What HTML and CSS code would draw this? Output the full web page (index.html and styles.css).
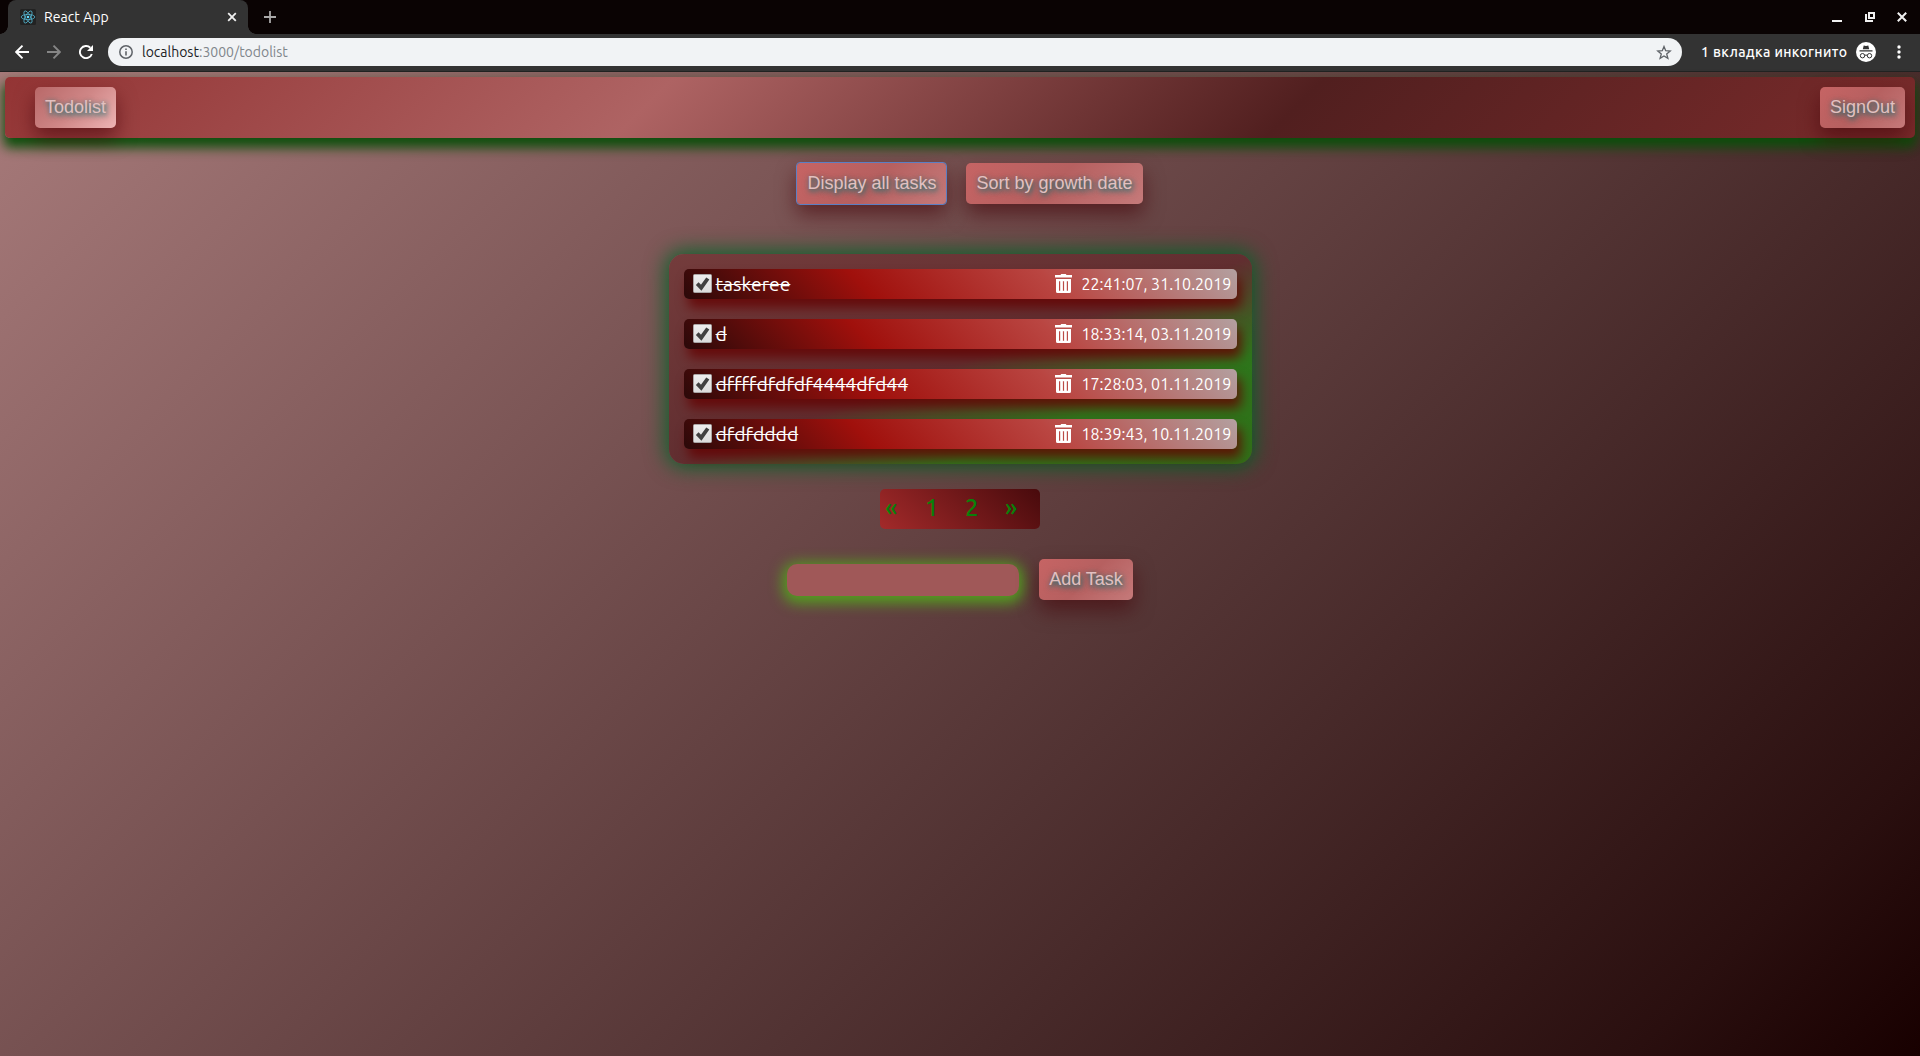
FILE: index.html
```html
<!DOCTYPE html>
<html lang="en">
<head>
<meta charset="utf-8">
<title>React App</title>
<link rel="stylesheet" href="styles.css">
</head>
<body>
<div class="browser">
  <div class="tabbar">
    <div class="tab">
      <svg class="favicon" width="16" height="16" viewBox="0 0 16 16"><rect width="16" height="16" rx="1.5" fill="#222"/><g fill="none" stroke="#53b4cf" stroke-width=".8"><ellipse cx="8" cy="8" rx="6.8" ry="2.6"/><ellipse cx="8" cy="8" rx="6.8" ry="2.6" transform="rotate(60 8 8)"/><ellipse cx="8" cy="8" rx="6.8" ry="2.6" transform="rotate(120 8 8)"/></g><circle cx="8" cy="8" r="1.3" fill="#61dafb"/></svg>
      <span class="tab-title">React App</span>
      <svg width="10" height="10" viewBox="0 0 10 10"><path d="M1.2 1.2l7.6 7.6M8.8 1.2L1.2 8.8" stroke="#f1f1f1" stroke-width="1.8"/></svg>
    </div>
    <svg class="new-tab" width="12" height="12" viewBox="0 0 12 12"><path d="M6 0v12M0 6h12" stroke="#a9a8a8" stroke-width="1.8"/></svg>
    <div class="window-controls">
      <svg width="10" height="12" viewBox="0 0 10 12"><path d="M0 10h10" stroke="#f1f1f1" stroke-width="2"/></svg>
      <svg width="10" height="12" viewBox="0 0 10 12"><path d="M4 2h5v5h-5zM1 3v7h7" fill="none" stroke="#f1f1f1" stroke-width="2"/></svg>
      <svg width="10" height="12" viewBox="0 0 10 12"><path d="M.8 1.8l8.4 8.4M9.200 1.8L.8 10.200" stroke="#f1f1f1" stroke-width="2"/></svg>
    </div>
  </div>
  <div class="toolbar">
    <svg class="nav" width="14" height="14" viewBox="0 0 14 14"><path d="M14 7H1.500M7.500 .7L1.200 7l6.300 6.300" fill="none" stroke="#fff" stroke-width="1.900"/></svg>
    <svg class="nav" width="14" height="14" viewBox="0 0 14 14"><path d="M0 7h12.500M6.500 .7L12.800 7l-6.300 6.300" fill="none" stroke="#868686" stroke-width="1.900"/></svg>
    <svg class="nav" width="14" height="14" viewBox="0 0 14 14"><path d="M12.800 9A6.100 6.100 0 1 1 11.300 2.700" fill="none" stroke="#fff" stroke-width="1.900"/><path d="M14 0v6H8z" fill="#fff"/></svg>
    <div class="omnibox">
      <svg width="14" height="14" viewBox="0 0 14 14"><circle cx="7" cy="7" r="6.200" fill="none" stroke="#5f6368" stroke-width="1.500"/><path d="M7 6.200v4.300M7 3.500v1.500" stroke="#5f6368" stroke-width="1.600"/></svg>
      <span class="url"><b>localhost</b>:3000/todolist</span>
      <svg class="star" width="16" height="15" viewBox="0 0 16 15"><path d="M8 1.500l1.700 4.200 4.500.3-3.500 2.900 1.200 4.400L8 10.900l-3.900 2.400 1.200-4.400L1.800 6l4.500-.3z" fill="none" stroke="#5f6368" stroke-width="1.300"/></svg>
    </div>
    <span class="incognito">1 вкладка инкогнито</span>
    <svg class="avatar" width="20" height="20" viewBox="0 0 20 20"><circle cx="10" cy="10" r="10" fill="#fff"/><path d="M6.800 7.200l.9-3.600 2.300.5 2.300-.5.9 3.600zM3.500 8.200h13v1.200h-13z" fill="#333"/><g fill="none" stroke="#333"><circle cx="6.500" cy="13.700" r="2.200"/><circle cx="13.500" cy="13.700" r="2.200"/><path d="M8.700 13.400q1.300-.8 2.600 0"/></g></svg>
    <svg class="menu" width="4" height="14" viewBox="0 0 4 14"><g fill="#fff"><circle cx="2" cy="2" r="1.700"/><circle cx="2" cy="7" r="1.700"/><circle cx="2" cy="12" r="1.700"/></g></svg>
  </div>
</div>
<main class="page">
  <header class="header">
    <button class="btn btn-light">Todolist</button>
    <button class="btn">SignOut</button>
  </header>
  <div class="filters">
    <button class="btn focused">Display all tasks</button>
    <button class="btn">Sort by growth date</button>
  </div>
  <ul class="tasks">
    <li class="task"><svg class="check" width="19" height="19" viewBox="0 0 19 19"><use href="#check"/></svg><span class="name">taskeree</span><svg width="17" height="19" viewBox="0 0 17 19"><use href="#trash"/></svg><time class="time">22:41:07, 31.10.2019</time></li>
    <li class="task"><svg class="check" width="19" height="19" viewBox="0 0 19 19"><use href="#check"/></svg><span class="name">d</span><svg width="17" height="19" viewBox="0 0 17 19"><use href="#trash"/></svg><time class="time">18:33:14, 03.11.2019</time></li>
    <li class="task"><svg class="check" width="19" height="19" viewBox="0 0 19 19"><use href="#check"/></svg><span class="name">dffffdfdfdf4444dfd44</span><svg width="17" height="19" viewBox="0 0 17 19"><use href="#trash"/></svg><time class="time">17:28:03, 01.11.2019</time></li>
    <li class="task"><svg class="check" width="19" height="19" viewBox="0 0 19 19"><use href="#check"/></svg><span class="name">dfdfdddd</span><svg width="17" height="19" viewBox="0 0 17 19"><use href="#trash"/></svg><time class="time">18:39:43, 10.11.2019</time></li>
  </ul>
  <nav class="pager"><span>«</span><span>1</span><span>2</span><span>»</span></nav>
  <form class="add">
    <input class="field" type="text">
    <button class="btn" type="button">Add Task</button>
  </form>
</main>
<svg class="defs" width="0" height="0">
  <defs>
    <linearGradient id="box" x1="0" y1="0" x2="0" y2="1"><stop offset="0" stop-color="#eee"/><stop offset="1" stop-color="#dcdcdc"/></linearGradient>
    <g id="check"><rect x=".5" y=".5" width="18" height="18" rx="1" fill="url(#box)" stroke="#a9a5a5"/><path d="M4.200 9.700l4 4 6.600-9.200" fill="none" stroke="#404040" stroke-width="3.800"/></g>
    <g id="trash" fill="#fff"><path d="M0 1h5.500l.7-1h4.600l.7 1H17v2.600H0z"/><path fill-rule="evenodd" d="M1 5h15v12.500q0 1.500-1.500 1.500h-12Q1 19 1 17.500zM4 7.200v9.500h1.200V7.200zM7.900 7.200v9.500h1.200V7.200zM11.800 7.200v9.500h1.200V7.200z"/></g>
  </defs>
</svg>
</body>
</html>
```
FILE: styles.css
```css
* { box-sizing: border-box; }
body {
  margin: 0;
  height: 1056px;
  display: flex;
  flex-direction: column;
  overflow: hidden;
  font-family: Ubuntu, "Noto Sans", sans-serif;
}
svg { display: block; flex: none; }
.defs { position: absolute; }

/* browser chrome */
.browser { flex: none; height: 72px; background: #333; border-bottom: 1px solid #222; }
.tabbar { height: 34px; background: #0a0303; display: flex; align-items: center; padding-left: 8px; }
.tab {
  width: 240px; height: 34px; background: #333; border-radius: 8px 8px 0 0;
  display: flex; align-items: center; padding: 0 11px 0 12px; position: relative;
}
.tab::before, .tab::after { content: ""; position: absolute; bottom: 0; width: 8px; height: 8px; }
.tab::before { left: -8px; background: radial-gradient(circle at 0 0, transparent 7.500px, #333 8px); }
.tab::after { right: -8px; background: radial-gradient(circle at 100% 0, transparent 7.500px, #333 8px); }
.tab-title { flex: 1; margin-left: 8px; font-size: 14px; letter-spacing: .05px; color: #fff; }
.new-tab { margin-left: 16px; }
.window-controls { margin-left: auto; display: flex; gap: 22px; padding-right: 13px; }
.window-controls svg:first-child { margin-right: 1px; }
.toolbar { height: 36px; display: flex; align-items: center; padding-left: 15px; }
.nav { margin-right: 18px; }
.omnibox {
  width: 1574px; height: 28px; margin-left: -3px; border-radius: 14px; background: #f1f3f5;
  display: flex; align-items: center; padding: 0 10px 0 11px;
}
.url { flex: 1; margin-left: 9px; font-size: 14px; color: #80868b; }
.url b { font-weight: 400; color: #202124; }
.incognito { margin-left: 19px; width: 147px; font-size: 14px; font-weight: 500; letter-spacing: .4px; color: #fff; white-space: nowrap; }
.avatar { margin-left: 8px; }
.menu { margin-left: 21px; }

/* app */
.page {
  flex: 1;
  display: flex; flex-direction: column; align-items: center;
  padding-top: 5px;
  background: linear-gradient(135deg, #a77a7a 0%, #523333 60%, #2a0f0f 90%, #180000 100%);
}
.btn {
  height: 41px; padding: 0 10px; border: 0; border-radius: 5px;
  font: 18px "Liberation Sans", sans-serif; color: #e2c0c0; white-space: nowrap;
  background: linear-gradient(135deg, #c66464, #b66060 50%, #c57a7a);
  box-shadow: 0 10px 20px rgba(70, 5, 10, .6);
  text-shadow: 1px 2px 5px #1b7070, 1px 2px 7px rgba(27, 112, 112, .6);
}
.btn-light { background: linear-gradient(135deg, #b86868, #cf8686 50%, #eeb4b4); }
.focused { outline: 1px solid #5b7fc4; outline-offset: 0; border-radius: 3px; }
.header {
  width: 1910px; height: 61px; padding: 0 10px 0 30px; border-radius: 5px;
  display: flex; align-items: center; justify-content: space-between;
  background: linear-gradient(135deg, #933434, #ae6363 34%, #511f1f 67%, #7a2b2b);
  box-shadow: 0 8px 12px 2px rgba(10, 78, 10, .95);
}
.filters { display: flex; gap: 20px; margin: 25px 0 0 20px; }
.tasks {
  list-style: none; margin: 50px 0 0; width: 583px; height: 210px; padding: 15px;
  border-radius: 15px; display: flex; flex-direction: column; gap: 20px;
  background: linear-gradient(160deg, #743c3c 0%, #612e30 51%, #2e761c 74%, #307018 100%);
  box-shadow: 0 0 20px 4px rgba(0, 100, 40, .85);
}
.task {
  height: 30px; padding: 0 6px 1px 9px; border-radius: 5px; display: flex; align-items: center;
  color: #fff;
  background: linear-gradient(45deg, #2a0909 0%, #a0100c 33%, #ba4642 66%, #b3a0a0 100%);
  box-shadow: 4px 9px 12px rgba(100, 0, 0, .8);
}
.name { flex: 1; margin-left: 4px; font-size: 19.400px; padding-top: 1px; text-decoration: line-through; }
.time { width: 149px; margin-left: 10px; padding-top: 1px; font-size: 16px; white-space: nowrap; }
.pager {
  width: 160px; height: 40px; margin-top: 25px; padding-left: 5px; border-radius: 5px;
  display: flex; color: #0a800a; font-size: 24px; font-weight: 500; line-height: 37px;
  background: linear-gradient(45deg, #a32a2a, #480a0c);
}
.pager span { flex: none; width: 40px; }
.add { display: flex; align-items: center; gap: 20px; margin: 30px 0 0; }
.field {
  width: 232px; height: 32px; border: 0; border-radius: 10px; padding: 0 10px; margin: 0;
  background: #a05858; box-shadow: 0 3px 14px 4px #54a01f;
}
```
